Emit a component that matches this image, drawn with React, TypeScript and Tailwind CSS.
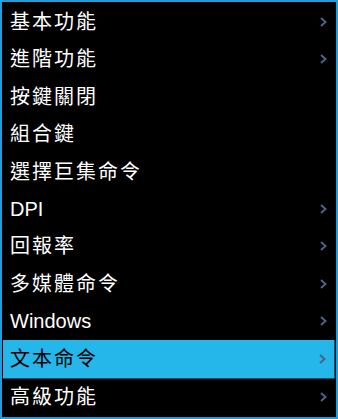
import React from 'react';

const items = [
  { label: '基本功能', sub: true, cjk: true },
  { label: '進階功能', sub: true, cjk: true },
  { label: '按鍵關閉', sub: false, cjk: true },
  { label: '組合鍵', sub: false, cjk: true },
  { label: '選擇巨集命令', sub: false, cjk: true },
  { label: 'DPI', sub: true, cjk: false },
  { label: '回報率', sub: true, cjk: true },
  { label: '多媒體命令', sub: true, cjk: true },
  { label: 'Windows', sub: true, cjk: false },
  { label: '文本命令', sub: true, cjk: true, active: true },
  { label: '高級功能', sub: true, cjk: true },
];

const Chevron = () => (
  <svg width="7" height="10" viewBox="0 0 7 10" className="text-[#4f6089]">
    <path d="M1 1 L5.5 5 L1 9" fill="none" stroke="currentColor" strokeWidth="2" />
  </svg>
);

export default function App() {
  return (
    <div
      className="w-[338px] h-[419px] bg-black border-2 border-[#1c9fdb] p-px flex flex-col"
      style={{ fontFamily: '"Liberation Sans", "Noto Sans CJK TC", sans-serif' }}
    >
      {items.map((item) => (
        <div
          key={item.label}
          className={`flex-1 flex items-center justify-between pl-[7px] pr-[8px] text-[20px] ${
            item.active
              ? 'bg-[#25b6ea] text-black border-r border-b border-[#17506a]'
              : 'text-white'
          }`}
        >
          <span className={item.cjk ? 'tracking-[2px]' : ''}>{item.label}</span>
          {item.sub && <Chevron />}
        </div>
      ))}
    </div>
  );
}
